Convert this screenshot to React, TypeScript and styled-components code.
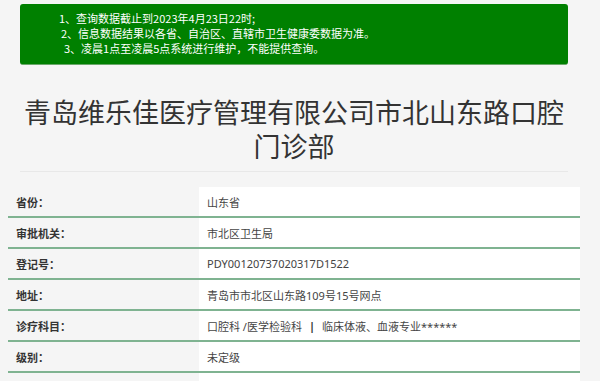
import React from 'react';
import styled, { createGlobalStyle } from 'styled-components';

const GlobalStyle = createGlobalStyle`
  html, body {
    margin: 0;
    padding: 0;
    background-color: #f5f5f5;
  }
  body {
    font-family: "Noto Sans", "Noto Sans CJK SC", sans-serif;
    color: #333333;
  }
`;

const Page = styled.div`
  width: 572px;
  margin-left: 8px;
  padding-top: 4px;
`;

const Notice = styled.div`
  margin: 0 12px;
  padding: 7px 0 8px 39px;
  background-color: #008000;
  border-radius: 3px;
  border-bottom: 1px solid #6aa86a;
  color: #ffffff;
  font-family: "Noto Sans CJK SC", sans-serif;
  font-size: 11px;
`;

const NoticeLine = styled.p<{ $indent: number }>`
  margin: 0;
  padding-left: ${props => props.$indent}px;
  line-height: 15px;
  white-space: nowrap;
`;

const Title = styled.h1`
  margin: 30px 12px 0;
  padding-bottom: 8px;
  border-bottom: 1px solid #e8e8e8;
  text-align: center;
  font-family: "Noto Sans CJK SC", sans-serif;
  font-size: 27px;
  font-weight: 400;
  line-height: 34px;
  color: #333333;
`;

const InfoTable = styled.div`
  margin-top: 15px;
  display: flex;
  flex-direction: column;
`;

const Row = styled.div`
  display: grid;
  grid-template-columns: 191px 1fr;
  height: 29px;
  border-bottom: 2px solid #7fb391;
`;

const Label = styled.div`
  display: flex;
  align-items: center;
  padding-left: 8px;
  background-color: #f5f5f5;
  font-family: "Noto Sans CJK SC", sans-serif;
  font-size: 11px;
  font-weight: 700;
  color: #333333;
`;

const Value = styled.div`
  display: flex;
  align-items: center;
  padding-left: 8px;
  background-color: #ffffff;
  font-size: 11px;
  color: #444444;
  white-space: nowrap;
`;

const Bar = styled.span`
  margin: 0 7px;
  font-weight: 700;
  color: #333333;
`;

const rows: { label: string; value: React.ReactNode }[] = [
  { label: '省份：', value: '山东省' },
  { label: '审批机关：', value: '市北区卫生局' },
  { label: '登记号：', value: 'PDY00120737020317D1522' },
  { label: '地址：', value: '青岛市市北区山东路109号15号网点' },
  {
    label: '诊疗科目：',
    value: (
      <>
        口腔科 /医学检验科<Bar>|</Bar>临床体液、血液专业******
      </>
    ),
  },
  { label: '级别：', value: '未定级' },
  { label: '', value: '' },
];

const App: React.FC = () => {
  return (
    <>
      <GlobalStyle />
      <Page>
        <Notice>
          <NoticeLine $indent={0}>1、查询数据截止到2023年4月23日22时;</NoticeLine>
          <NoticeLine $indent={2}>2、信息数据结果以各省、自治区、直辖市卫生健康委数据为准。</NoticeLine>
          <NoticeLine $indent={5}>3、凌晨1点至凌晨5点系统进行维护，不能提供查询。</NoticeLine>
        </Notice>

        <Title>青岛维乐佳医疗管理有限公司市北山东路口腔门诊部</Title>

        <InfoTable>
          {rows.map((row, i) => (
            <Row key={i}>
              <Label>{row.label}</Label>
              <Value>{row.value}</Value>
            </Row>
          ))}
        </InfoTable>
      </Page>
    </>
  );
};

export default App;
